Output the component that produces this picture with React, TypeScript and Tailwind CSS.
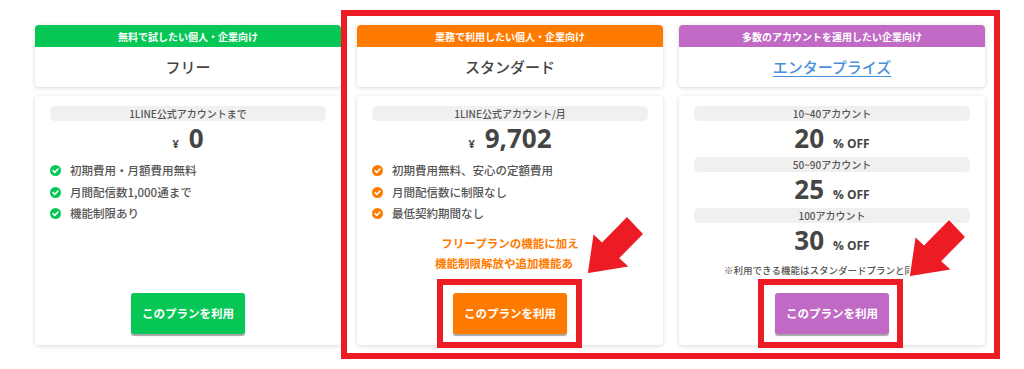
import React from "react";

const JP = '"Noto Sans CJK JP", "Noto Sans", sans-serif';
const NUM = '"Open Sans", "Noto Sans CJK JP", sans-serif';

const Check = ({ color }: { color: string }) => (
  <svg width="11" height="11" viewBox="0 0 12 12" className="shrink-0">
    <circle cx="6" cy="6" r="6" fill={color} />
    <path d="M3.3 6.2 L5.2 8 L8.7 4.4" stroke="white" strokeWidth="1.7" fill="none" strokeLinecap="round" strokeLinejoin="round" />
  </svg>
);

const Pill = ({ children }: { children: React.ReactNode }) => (
  <div className="h-[15px] rounded-[5px] bg-[#f0f0f0] text-[10px] leading-[15px] font-medium text-[#555] text-center">{children}</div>
);

const Price = ({ value }: { value: string }) => (
  <div className="mt-[2px] h-[30px] flex items-baseline justify-center gap-[10px] text-[#454545]" style={{ fontFamily: NUM }}>
    <span className="text-[11px] font-bold">¥</span>
    <span className="text-[26px] leading-[30px] font-bold">{value}</span>
  </div>
);

const Off = ({ value }: { value: string }) => (
  <div className="mt-[2px] h-[30px] flex items-baseline justify-center gap-[9px] text-[#454545]" style={{ fontFamily: NUM }}>
    <span className="text-[26px] leading-[30px] font-bold">{value}</span>
    <span className="text-[12px] font-bold">% OFF</span>
  </div>
);

const Features = ({ items, color }: { items: string[]; color: string }) => (
  <div className="mt-[7px] flex flex-col">
    {items.map((t) => (
      <div key={t} className="h-[21.5px] flex items-center gap-[9px] text-[11.5px] font-medium text-[#555]">
        <Check color={color} />
        <span>{t}</span>
      </div>
    ))}
  </div>
);

const Header = ({ label, bar, children }: { label: string; bar: string; children: React.ReactNode }) => (
  <div className="h-[62px] rounded-[4px] bg-white shadow-[0_1px_4px_rgba(0,0,0,0.16)] overflow-hidden flex flex-col">
    <div className={`h-[22px] ${bar} text-white text-[10px] font-bold flex items-center justify-center`}>{label}</div>
    <div className="flex-1 flex items-center justify-center text-[15px] font-medium text-[#444]">{children}</div>
  </div>
);

const Btn = ({ bg }: { bg: string }) => (
  <div className={`mt-auto self-center w-[114px] h-[41px] rounded-[3px] ${bg} text-white text-[11.5px] font-bold flex items-center justify-center shadow-[0_2px_1px_rgba(0,0,0,0.35)]`}>
    このプランを利用
  </div>
);

const Body = ({ children }: { children: React.ReactNode }) => (
  <div className="mt-[9px] h-[249px] rounded-[4px] bg-white shadow-[0_1px_4px_rgba(0,0,0,0.16)] flex flex-col px-[15px] pt-[10px] pb-[11px]">
    {children}
  </div>
);

export default function App() {
  return (
    <div className="relative w-[1024px] h-[369px] bg-white overflow-hidden" style={{ fontFamily: JP }}>
      <div className="flex gap-4 pl-[35px] pt-[25px]">
        <div className="w-[306px] flex flex-col">
          <Header label="無料で試したい個人・企業向け" bar="bg-[#06c755]">フリー</Header>
          <Body>
            <Pill>1LINE公式アカウントまで</Pill>
            <Price value="0" />
            <Features color="#06c755" items={["初期費用・月額費用無料", "月間配信数1,000通まで", "機能制限あり"]} />
            <Btn bg="bg-[#06c755]" />
          </Body>
        </div>
        <div className="w-[306px] flex flex-col">
          <Header label="業務で利用したい個人・企業向け" bar="bg-[#ff7b00]">スタンダード</Header>
          <Body>
            <Pill>1LINE公式アカウント/月</Pill>
            <Price value="9,702" />
            <Features color="#ff7b00" items={["初期費用無料、安心の定額費用", "月間配信数に制限なし", "最低契約期間なし"]} />
            <div className="mt-[8px] text-[11.5px] leading-[20px] font-bold text-[#ff7b00] text-center">
              <div>フリープランの機能に加え</div>
              <div className="pr-[12px]">機能制限解放や追加機能あ</div>
            </div>
            <Btn bg="bg-[#ff7b00]" />
          </Body>
        </div>
        <div className="w-[306px] flex flex-col">
          <Header label="多数のアカウントを運用したい企業向け" bar="bg-[#c06ac6]">
            <span className="text-[#4a90d9] underline underline-offset-[3px]">エンタープライズ</span>
          </Header>
          <Body>
            <Pill>10~40アカウント</Pill>
            <Off value="20" />
            <div className="mt-[4px]"><Pill>50~90アカウント</Pill></div>
            <Off value="25" />
            <div className="mt-[4px]"><Pill>100アカウント</Pill></div>
            <Off value="30" />
            <div className="mt-[8px] pr-[26px] text-[9.5px] leading-[14px] font-medium text-[#555] text-center whitespace-nowrap">※利用できる機能はスタンダードプランと同</div>
            <Btn bg="bg-[#c06ac6]" />
          </Body>
        </div>
      </div>

      {/* annotation overlays */}
      <div className="absolute left-[341px] top-[10px] w-[659px] h-[349px] border-[6px] border-[#ed1c24] pointer-events-none" />
      <div className="absolute left-[437px] top-[279px] w-[145px] h-[69px] border-[6px] border-[#ed1c24] pointer-events-none" />
      <div className="absolute left-[758px] top-[279px] w-[145px] h-[69px] border-[6px] border-[#ed1c24] pointer-events-none" />
      <svg className="absolute left-0 top-0 pointer-events-none" width="1024" height="369" viewBox="0 0 1024 369">
        <polygon fill="#ed1c24" stroke="white" strokeWidth="1.5" strokeLinejoin="miter" points="587,274 593,233 602,241.4 627,216 644,234 620.3,258.1 630,267" />
        <polygon fill="#ed1c24" stroke="white" strokeWidth="1.5" strokeLinejoin="miter" points="909,277 915,236 924,244.4 949,219 966,237 942.3,261.1 952,270" />
      </svg>
    </div>
  );
}
